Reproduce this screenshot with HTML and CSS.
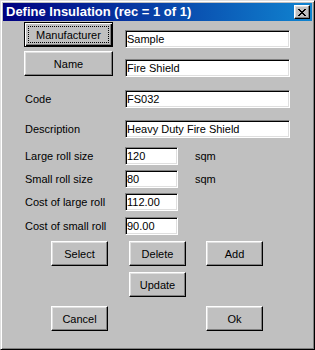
FILE: index.html
```html
<!DOCTYPE html>
<html lang="en">
<head>
    <meta charset="UTF-8">
    <meta name="viewport" content="width=device-width, initial-scale=1.0">
    <title>Define Insulation</title>
    <link rel="stylesheet" href="styles.css">
</head>
<body>
    <div class="window">
        <!-- Title bar -->
        <div class="titlebar">
            <span class="title">Define Insulation (rec = 1 of 1)</span>
            <button class="close-btn" type="button">
                <svg width="8" height="7" viewBox="0 0 8 7" shape-rendering="crispEdges">
                    <path d="M0 0h2v1H0zM6 0h2v1H6zM1 1h2v1H1zM5 1h2v1H5zM2 2h4v1H2zM3 3h2v1H3zM2 4h4v1H2zM1 5h2v1H1zM5 5h2v1H5zM0 6h2v1H0zM6 6h2v1H6z" fill="#000"/>
                </svg>
            </button>
        </div>

        <!-- Dialog contents -->
        <div class="dialog-body">
            <div class="lookup-row">
                <button class="btn btn-default lookup-btn" type="button"><span class="focus">Manufacturer</span></button>
                <input class="text-field wide" type="text" value="Sample">
            </div>
            <div class="lookup-row">
                <button class="btn lookup-btn" type="button">Name</button>
                <input class="text-field wide" type="text" value="Fire Shield">
            </div>

            <div class="field-row code-row">
                <label class="field-label">Code</label>
                <input class="text-field wide" type="text" value="FS032">
            </div>
            <div class="field-row desc-row">
                <label class="field-label">Description</label>
                <input class="text-field wide" type="text" value="Heavy Duty Fire Shield">
            </div>
            <div class="field-row large-row">
                <label class="field-label">Large roll size</label>
                <input class="text-field short" type="text" value="120">
                <span class="unit">sqm</span>
            </div>
            <div class="field-row small-row">
                <label class="field-label">Small roll size</label>
                <input class="text-field short" type="text" value="80">
                <span class="unit">sqm</span>
            </div>
            <div class="field-row small-row">
                <label class="field-label">Cost of large roll</label>
                <input class="text-field short" type="text" value="112.00">
            </div>
            <div class="field-row cost-row">
                <label class="field-label">Cost of small roll</label>
                <input class="text-field short" type="text" value="90.00">
            </div>

            <!-- Record buttons -->
            <div class="action-row first-actions">
                <button class="btn action-btn" type="button">Select</button>
                <button class="btn action-btn" type="button">Delete</button>
                <button class="btn action-btn" type="button">Add</button>
            </div>
            <div class="action-row update-actions">
                <button class="btn action-btn col-2" type="button">Update</button>
            </div>
            <div class="action-row last-actions">
                <button class="btn action-btn" type="button">Cancel</button>
                <button class="btn action-btn col-3" type="button">Ok</button>
            </div>
        </div>
    </div>
</body>
</html>
```

FILE: styles.css
```css
body {
    margin: 0;
    font-family: "Liberation Sans", Arial, sans-serif;
    font-size: 11px;
    color: #000;
}

.window {
    width: 315px;
    height: 350px;
    box-sizing: border-box;
    padding: 2px;
    background-color: #c0c0c0;
    border: 1px solid;
    border-color: #dfdfdf #000 #000 #dfdfdf;
    box-shadow: inset 1px 1px #fff, inset -1px -1px #808080;
}

/* Title bar */
.titlebar {
    height: 18px;
    display: flex;
    align-items: center;
    justify-content: space-between;
    padding: 0 2px 0 3px;
    background: linear-gradient(90deg, #000080, #1084d0);
}

.title {
    color: #fff;
    font-weight: bold;
    font-size: 13px;
    line-height: 18px;
}

.close-btn {
    width: 16px;
    height: 14px;
    padding: 0;
    display: flex;
    align-items: center;
    justify-content: center;
    background-color: #c0c0c0;
    border: 1px solid;
    border-color: #fff #000 #000 #fff;
    box-shadow: inset -1px -1px #808080, inset 1px 1px #dfdfdf;
}

/* Dialog body */
.dialog-body {
    padding: 1px 0 0 21px;
}

.btn {
    box-sizing: border-box;
    height: 25px;
    padding: 0;
    font-family: inherit;
    font-size: 11px;
    color: #000;
    background-color: #c0c0c0;
    border: 1px solid;
    border-color: #fff #000 #000 #fff;
    box-shadow: inset -1px -1px #808080, inset 1px 1px #dfdfdf;
}

.btn-default {
    border-color: #000;
    box-shadow: inset 1px 1px #fff, inset -1px -1px #000, inset -2px -2px #808080;
    padding: 3px;
}

.focus {
    display: flex;
    align-items: center;
    justify-content: center;
    height: 100%;
    box-sizing: border-box;
    border: 1px dotted #000;
}

.text-field {
    box-sizing: border-box;
    height: 18px;
    padding: 0 1px;
    font-family: inherit;
    font-size: 11px;
    color: #000;
    background-color: #fff;
    border: 1px solid;
    border-color: #808080 #fff #fff #808080;
    box-shadow: inset 1px 1px #000, inset -1px -1px #dfdfdf;
    outline: none;
}

.wide {
    width: 165px;
}

.short {
    width: 53px;
}

.lookup-row {
    display: flex;
    align-items: flex-end;
    gap: 12px;
    height: 26px;
}

.lookup-row + .lookup-row {
    margin-top: 3px;
}

.lookup-btn {
    width: 89px;
    margin-bottom: 1px;
}

.field-row {
    display: flex;
    align-items: center;
    height: 18px;
}

.field-label {
    width: 100px;
    padding-left: 1px;
}

.unit {
    margin-left: 17px;
}

.code-row {
    margin-top: 13px;
}

.desc-row {
    margin-top: 12px;
}

.large-row {
    margin-top: 9px;
}

.small-row {
    margin-top: 5px;
}

.cost-row {
    margin-top: 6px;
}

/* Record buttons */
.action-row {
    display: grid;
    grid-template-columns: 78px 77px 57px;
    margin-left: 27px;
}

.action-btn {
    width: 57px;
}

.col-2 {
    grid-column: 2;
}

.col-3 {
    grid-column: 3;
}

.first-actions {
    margin-top: 6px;
}

.update-actions {
    margin-top: 6px;
}

.last-actions {
    margin-top: 9px;
}
```
